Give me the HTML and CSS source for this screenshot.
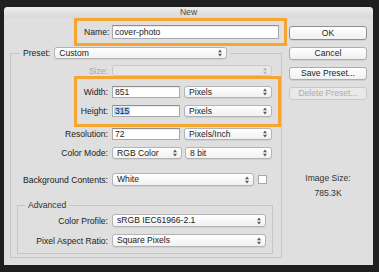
FILE: index.html
```html
<!DOCTYPE html>
<html lang="en">
<head>
    <meta charset="UTF-8">
    <meta name="viewport" content="width=device-width, initial-scale=1.0">
    <title>New</title>
    <link rel="stylesheet" href="styles.css">
</head>
<body>
    <svg width="0" height="0" style="position:absolute">
        <symbol id="updown" viewBox="0 0 4 8">
            <path d="M0 3.2L2 0.6L4 3.2Z M0 4.8L2 7.4L4 4.8Z"/>
        </symbol>
    </svg>

    <div class="window">
        <div class="titlebar">New</div>

        <div class="content">
            <div class="main">
                <div class="name-box">
                    <span class="label">Name:</span>
                    <div class="input">cover-photo</div>
                </div>

                <fieldset class="group preset">
                    <legend>
                        <span>Preset:</span>
                        <div class="select preset-select"><span>Custom</span><svg><use href="#updown"/></svg></div>
                    </legend>

                    <div class="row size-row">
                        <span class="label disabled">Size:</span>
                        <div class="select disabled wide"><span></span><svg><use href="#updown"/></svg></div>
                    </div>

                    <div class="dims-box">
                        <div class="row">
                            <span class="label">Width:</span>
                            <div class="input num">851</div>
                            <div class="select unit"><span>Pixels</span><svg><use href="#updown"/></svg></div>
                        </div>
                        <div class="row">
                            <span class="label">Height:</span>
                            <div class="input num"><span class="selected">315</span></div>
                            <div class="select unit"><span>Pixels</span><svg><use href="#updown"/></svg></div>
                        </div>
                    </div>

                    <div class="row res-row">
                        <span class="label">Resolution:</span>
                        <div class="input num">72</div>
                        <div class="select unit"><span>Pixels/Inch</span><svg><use href="#updown"/></svg></div>
                    </div>

                    <div class="row mode-row">
                        <span class="label">Color Mode:</span>
                        <div class="select mode"><span>RGB Color</span><svg><use href="#updown"/></svg></div>
                        <div class="select bits"><span>8 bit</span><svg><use href="#updown"/></svg></div>
                    </div>

                    <div class="row bg-row">
                        <span class="label">Background Contents:</span>
                        <div class="select bg"><span>White</span><svg><use href="#updown"/></svg></div>
                        <div class="swatch"></div>
                    </div>

                    <fieldset class="group advanced">
                        <legend>Advanced</legend>
                        <div class="row profile-row">
                            <span class="label">Color Profile:</span>
                            <div class="select adv"><span>sRGB IEC61966-2.1</span><svg><use href="#updown"/></svg></div>
                        </div>
                        <div class="row ratio-row">
                            <span class="label">Pixel Aspect Ratio:</span>
                            <div class="select adv"><span>Square Pixels</span><svg><use href="#updown"/></svg></div>
                        </div>
                    </fieldset>
                </fieldset>
            </div>

            <div class="side">
                <div class="button default">OK</div>
                <div class="button">Cancel</div>
                <div class="button">Save Preset...</div>
                <div class="button disabled">Delete Preset...</div>

                <div class="image-size">
                    <div>Image Size:</div>
                    <div>785.3K</div>
                </div>
            </div>
        </div>
    </div>
</body>
</html>
```

FILE: styles.css
```css
* {
    margin: 0;
    padding: 0;
    box-sizing: border-box;
}

body {
    background: #1f1f1f;
    font-family: "Liberation Sans", Arial, sans-serif;
    font-size: 8.6px;
    color: #222;
}

.window {
    margin: 7px 0 0 4px;
    width: 369px;
    height: 258px;
    background: #dfdfdf;
    border-radius: 4px 4px 0 0;
    display: flex;
    flex-direction: column;
}

.titlebar {
    height: 11px;
    line-height: 11px;
    text-align: center;
    color: #4c4c4c;
    background: linear-gradient(#ececec, #d9d9d9);
    border-radius: 4px 4px 0 0;
}

.content {
    display: flex;
}

.main {
    width: 283px;
}

.side {
    width: 78px;
    margin-left: 2px;
    display: flex;
    flex-direction: column;
}

/* name */
.name-box {
    margin-left: 70px;
    width: 213px;
    height: 28px;
    border: 3px solid #f6a530;
    display: flex;
    align-items: center;
    gap: 4px;
    padding: 0 5px 0 7px;
}

.name-box .label {
    width: 24px;
    text-align: right;
}

.name-box .input {
    flex: 1;
    height: 14px;
}

/* controls */
.input {
    height: 12px;
    background: #fff;
    border: 1px solid #a9a9a9;
    border-top-color: #8e8e8e;
    box-shadow: inset 0 1px 1px rgba(0,0,0,0.08);
    padding-left: 2px;
    display: flex;
    align-items: center;
    line-height: 1;
}

.input.num {
    width: 68px;
}

.selected {
    background: #b5d5fc;
    padding: 0 1px;
    margin-left: -1px;
}

.select {
    height: 12px;
    background: linear-gradient(#ffffff, #f1f1f1);
    border: 1px solid #b3b3b3;
    border-radius: 3px;
    box-shadow: 0 1px 0 rgba(0,0,0,0.06);
    display: flex;
    align-items: center;
    justify-content: space-between;
    padding: 0 4px 0 4px;
    line-height: 1;
}

.select svg {
    width: 4px;
    height: 8px;
    fill: #5a5a5a;
    flex-shrink: 0;
}

.select.disabled {
    background: #e6e6e6;
    border-color: #cacaca;
    box-shadow: none;
}

.select.disabled svg {
    fill: #b5b5b5;
}

.preset-select {
    width: 173px;
}

.select.wide {
    width: 160px;
    height: 11px;
}

.select.unit {
    width: 88px;
}

.select.mode {
    width: 70px;
}

.select.bits {
    width: 87px;
    margin-left: -1px;
}

.select.bg {
    width: 142px;
    height: 13px;
}

.select.adv {
    width: 154px;
    height: 13px;
}

.swatch {
    width: 9px;
    height: 9px;
    background: #fff;
    border: 1px solid #a8a8a8;
}

/* groups */
.group {
    border: 1px solid #c6c6c6;
    padding: 0;
}

.group legend {
    display: flex;
    align-items: center;
    gap: 4px;
    padding: 0 3px;
}

.preset {
    width: 270px;
    height: 211px;
    margin: 1px 0 0 6px;
}

.preset legend {
    margin-left: 9px;
}

.advanced {
    width: 256px;
    margin: 14px 0 0 6px;
    padding-bottom: 6px;
}

.advanced legend {
    margin-left: 7px;
    height: 10px;
    color: #333;
}

/* rows */
.row {
    display: flex;
    align-items: center;
    gap: 4px;
    height: 12px;
}

.row .label {
    width: 97px;
    text-align: right;
    flex-shrink: 0;
}

.label.disabled {
    color: #a9a9a9;
}

.size-row {
    margin-top: 6px;
    height: 11px;
}

.dims-box {
    margin-left: 63px;
    width: 207px;
    height: 51px;
    border: 3px solid #f6a530;
    padding-top: 7px;
    display: flex;
    flex-direction: column;
    gap: 7px;
}

.dims-box .label {
    width: 31px;
}

.res-row {
    margin-top: 1px;
}

.mode-row {
    margin-top: 7px;
}

.bg-row {
    margin-top: 14px;
    height: 13px;
}

.advanced .label {
    width: 90px;
}

.profile-row {
    margin-top: 4px;
    height: 13px;
}

.ratio-row {
    margin-top: 7px;
    height: 13px;
}

/* buttons */
.button {
    height: 13px;
    margin-top: 7px;
    background: linear-gradient(#ffffff, #f0f0f0);
    border: 1px solid #acacac;
    border-radius: 3px;
    box-shadow: 0 1px 0 rgba(0,0,0,0.07);
    display: flex;
    align-items: center;
    justify-content: center;
    line-height: 1;
}

.button.default {
    margin-top: 8px;
    height: 14px;
    border-color: #8f8f8f;
}

.button.disabled {
    color: #acacac;
    background: #e9e9e9;
    border-color: #c9c9c9;
    box-shadow: none;
}

.image-size {
    margin-top: 71px;
    text-align: center;
    line-height: 15px;
    color: #333;
}
```
